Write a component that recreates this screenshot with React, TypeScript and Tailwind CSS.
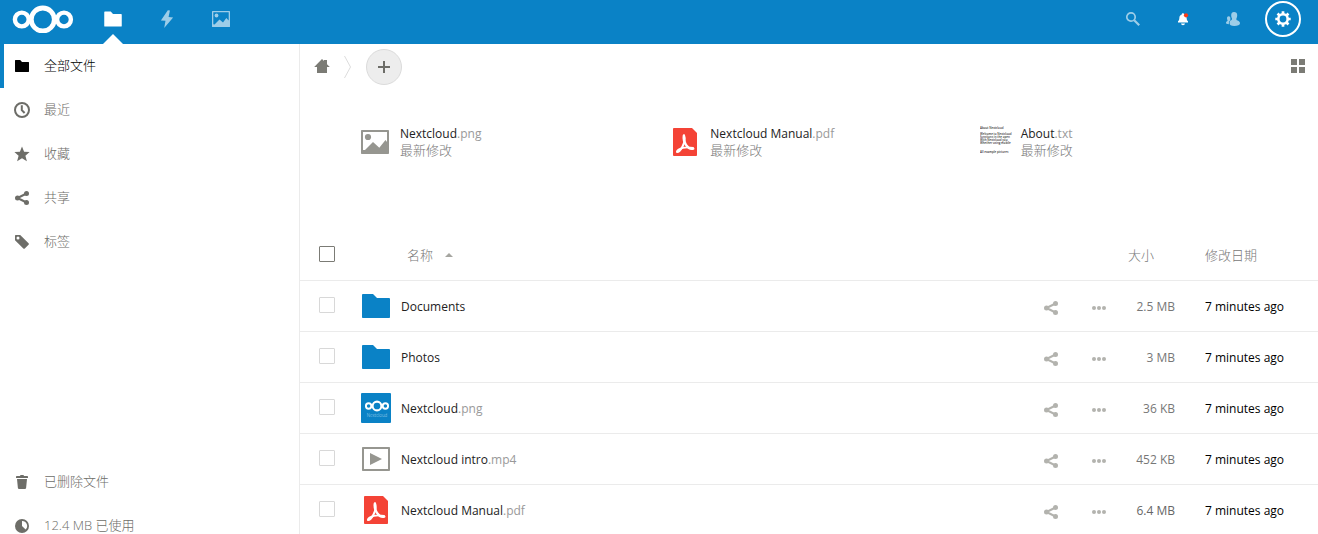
import React from "react";

type IconProps = { className?: string };

const Logo = ({ className = "" }: IconProps) => (
  <svg viewBox="0 0 62 28" className={className} fill="none" stroke="currentColor" aria-hidden="true">
    <circle cx="30.8" cy="14.5" r="11.5" strokeWidth="4.800" />
    <circle cx="9.8" cy="14.5" r="6.9" strokeWidth="4.400" />
    <circle cx="52" cy="14.5" r="6.9" strokeWidth="4.400" />
  </svg>
);

const FolderIcon = ({ className = "" }: IconProps) => (
  <svg viewBox="0 0 16 16" className={className} fill="currentColor" aria-hidden="true">
    <path d="M1.5 2c-.25 0-.5.25-.5.5v11c0 .26.24.5.5.5h13c.26 0 .5-.24.5-.5v-9c0-.25-.25-.5-.5-.5H8L6.2 2z" />
  </svg>
);

const BigFolderIcon = ({ className = "" }: IconProps) => (
  <svg viewBox="0 0 32 32" className={className} fill="currentColor" aria-hidden="true">
    <path d="M3 4c-.5 0-1 .5-1 1v22c0 .52.48 1 1 1h26c.52 0 1-.48 1-1V9c0-.5-.5-1-1-1H17l-4-4z" />
  </svg>
);

const BoltIcon = ({ className = "" }: IconProps) => (
  <svg viewBox="0 0 20 20" className={className} fill="currentColor" aria-hidden="true">
    <path d="M10.2 1 4 11.6h4.6L7.8 19 16 7.8h-4.6L12.3 1z" transform="translate(0 .2) rotate(4 10 10)" />
  </svg>
);

const GalleryIcon = ({ className = "" }: IconProps) => (
  <svg viewBox="0 0 20 20" className={className} fill="currentColor" aria-hidden="true">
    <path fillRule="evenodd" d="M1.6 2h16.8c.4 0 .6.3.6.6v14.8c0 .4-.2.6-.6.6H1.6c-.3 0-.6-.2-.6-.6V2.6c0-.3.3-.6.6-.6zm.7 1.3v11.9l1.2.3 5-5 3.5 3 3.3-4.6 2.4 2.5V3.3z" />
    <circle cx="5.5" cy="6.5" r="1.9" />
  </svg>
);

const ImageFileIcon = ({ className = "" }: IconProps) => (
  <svg viewBox="0 0 32 32" className={className} fill="currentColor" aria-hidden="true">
    <path fillRule="evenodd" d="M3 4h26c.6 0 1 .4 1 1v22c0 .6-.4 1-1 1H3c-.6 0-1-.4-1-1V5c0-.6.4-1 1-1zm1 2v17.9h2l8-7.9 6.3 5.7L26.5 14l1.5 2V6z" />
    <circle cx="9" cy="11" r="3.1" />
  </svg>
);

const VideoFileIcon = ({ className = "" }: IconProps) => (
  <svg viewBox="0 0 32 32" className={className} fill="currentColor" aria-hidden="true">
    <path fillRule="evenodd" d="M3 4h26c.6 0 1 .4 1 1v22c0 .6-.4 1-1 1H3c-.6 0-1-.4-1-1V5c0-.6.4-1 1-1zm1 2v20h24V6z" />
    <path d="M10 10v12l12-6z" />
  </svg>
);

const PdfFileIcon = ({ className = "" }: IconProps) => (
  <svg viewBox="0 0 32 32" className={className} aria-hidden="true">
    <path d="M5 2c-.5 0-1 .5-1 1v26c0 .5.5 1 1 1h22c.5 0 1-.5 1-1V7l-5-5z" fill="#f44336" />
    <g fill="none" stroke="#fff" strokeLinecap="round" strokeLinejoin="round">
      <path d="M14.8 9.600c-.5 3 .3 6.300 2.200 9.200 1.900 2.800 5 4.600 7.300 3.800" strokeWidth="2.300" />
      <path d="M15 9.400c1.400 3.600.6 7.300-1.600 11.300-1.800 3.200-4 5.500-5.400 5.300" strokeWidth="2.100" />
      <path d="M8 25.300c1.800-3.200 8.600-4.700 16-3.300" strokeWidth="1.800" />
    </g>
  </svg>
);

const NextcloudThumb = ({ className = "" }: IconProps) => (
  <svg viewBox="0 0 32 32" className={className} aria-hidden="true">
    <rect x="1" y="1" width="30" height="30" rx="1" fill="#0a82c6" />
    <g fill="none" stroke="#fff">
      <circle cx="17" cy="14" r="4.400" strokeWidth="2.100" />
      <circle cx="8.600" cy="14" r="2.700" strokeWidth="1.900" />
      <circle cx="25.400" cy="14" r="2.700" strokeWidth="1.900" />
    </g>
    <text x="17" y="25" textAnchor="middle" fontSize="4.500" fill="#b5daee" fontFamily="Open Sans, sans-serif">Nextcloud</text>
  </svg>
);

const SearchIcon = ({ className = "" }: IconProps) => (
  <svg viewBox="0 0 16 16" className={className} fill="none" stroke="currentColor" aria-hidden="true">
    <circle cx="6" cy="6" r="4.200" strokeWidth="1.700" />
    <path d="m9.200 9.200 5 5" strokeWidth="2.200" />
  </svg>
);

const BellIcon = ({ className = "" }: IconProps) => (
  <svg viewBox="0 0 16 16" className={className} fill="currentColor" aria-hidden="true">
    <path d="M8 2.200c-.7 0-1.200.5-1.200 1.200C5.200 3.900 4.500 5 4.400 6.600 4.300 9 3.900 9.600 3 10.300v1.200h10v-1.200c-.9-.7-1.300-1.300-1.400-3.700L8.800 2.500zM6 12.500h4c-.2 1-1 1.700-2 1.700s-1.800-.7-2-1.700z" />
    <circle cx="11" cy="4.300" r="2.100" fill="#ff3a14" />
  </svg>
);

const ContactsIcon = ({ className = "" }: IconProps) => (
  <svg viewBox="0 0 16 16" className={className} fill="currentColor" aria-hidden="true">
    <path d="M9 1C7.300 1 6.200 2.200 6.200 4c0 1.400.2 2.200.6 3 .3.700.3 1.900-.6 2.300C4.600 10 4.600 10.700 4.600 12.300 4.600 14 6 15 9.300 15s5.700-1 5.700-2.700c0-1.600-1.200-2.300-3-3-.7-.4-.8-1.500-.4-2.300.4-.8.6-1.600.6-3 0-1.800-1.100-3-3.200-3z" />
    <path d="M3.700 5.300C2.600 5.300 2 6.100 2 7.200c0 .9.200 1.300.5 2 .2.500 0 .8-.4 1C1.300 10.600 1 11 1 12c0 .7.900 1.100 2.900 1.200-.1-1.800 0-3 1.600-3.900-.3-.4-.1-1.300-.1-2.100 0-1.100-.6-1.900-1.700-1.900z" />
  </svg>
);

const GearIcon = ({ className = "" }: IconProps) => (
  <svg viewBox="0 0 16 16" className={className} fill="none" stroke="currentColor" aria-hidden="true">
    <circle cx="8" cy="8" r="4.700" strokeWidth="2.600" />
    <path
      d="M8 .3v2.700M8 13v2.700M.3 8H3M13 8h2.700M2.560 2.560l1.900 1.900M11.540 11.540l1.900 1.900M2.560 13.440l1.900-1.900M11.540 4.460l1.900-1.900"
      strokeWidth="2.700"
    />
  </svg>
);

const ClockIcon = ({ className = "" }: IconProps) => (
  <svg viewBox="0 0 16 16" className={className} fill="none" stroke="currentColor" aria-hidden="true">
    <circle cx="8" cy="8" r="7" strokeWidth="2" />
    <path d="M7.800 3.200v4.900l2.800 2.900" strokeWidth="2" />
  </svg>
);

const StarIcon = ({ className = "" }: IconProps) => (
  <svg viewBox="0 0 16 16" className={className} fill="currentColor" aria-hidden="true">
    <path d="m8 .6 2.100 5.100 5.500.4-4.200 3.600 1.500 5.500L8 12.200l-4.900 3 1.500-5.500L.4 6.100l5.500-.4z" />
  </svg>
);

const ShareIcon = ({ className = "" }: IconProps) => (
  <svg viewBox="0 0 16 16" className={className} fill="currentColor" aria-hidden="true">
    <circle cx="12.500" cy="3.500" r="2.500" />
    <circle cx="3.500" cy="8" r="2.500" />
    <circle cx="12.500" cy="12.500" r="2.500" />
    <path d="M12.500 3.500 3.500 8l9 4.500" fill="none" stroke="currentColor" strokeWidth="2.100" />
  </svg>
);

const TagIcon = ({ className = "" }: IconProps) => (
  <svg viewBox="0 0 16 16" className={className} fill="currentColor" aria-hidden="true">
    <path fillRule="evenodd" d="M1.600 1 1 1.600v4.600l8.600 8.600h.9l4.300-4.300v-.9L6.200 1zM4 2.500a1.500 1.500 0 1 1 0 3 1.500 1.500 0 0 1 0-3z" />
  </svg>
);

const TrashIcon = ({ className = "" }: IconProps) => (
  <svg viewBox="0 0 16 16" className={className} fill="currentColor" aria-hidden="true">
    <path d="M6.500 1 6 2H3c-.6 0-1 .4-1 1v1h12V3c0-.6-.4-1-1-1h-3l-.5-1zM3 5l.9 9c.1.600.5 1 1.100 1h6c.6 0 1-.4 1.100-1L13 5z" />
  </svg>
);

const QuotaIcon = ({ className = "" }: IconProps) => (
  <svg viewBox="0 0 16 16" className={className} aria-hidden="true">
    <circle cx="8" cy="8" r="7" fill="currentColor" />
    <path d="M8 3v5l3.600 3.600A5 5 0 0 0 8 3z" fill="#fff" />
  </svg>
);

const HomeIcon = ({ className = "" }: IconProps) => (
  <svg viewBox="0 0 16 16" className={className} fill="currentColor" aria-hidden="true">
    <path d="M8 0 .2 8H3v6h10V8h2.800L13 5.200V1h-3v1z" />
  </svg>
);

const ChevronIcon = ({ className = "" }: IconProps) => (
  <svg viewBox="0 0 8 22" className={className} fill="none" stroke="currentColor" aria-hidden="true">
    <path d="M.5 0l6 11-6 11" />
  </svg>
);

const PlusIcon = ({ className = "" }: IconProps) => (
  <svg viewBox="0 0 16 16" className={className} fill="none" stroke="currentColor" strokeWidth="2" aria-hidden="true">
    <path d="M8 2v12M2 8h12" />
  </svg>
);

const GridIcon = ({ className = "" }: IconProps) => (
  <svg viewBox="0 0 16 16" className={className} fill="currentColor" aria-hidden="true">
    <path d="M1 0h6v6H1zM9 0h6v6H9zM1 8h6v6H1zM9 8h6v6H9z" />
  </svg>
);

const MoreIcon = ({ className = "" }: IconProps) => (
  <svg viewBox="0 0 16 16" className={className} fill="currentColor" aria-hidden="true">
    <circle cx="3" cy="8" r="2" />
    <circle cx="8" cy="8" r="2" />
    <circle cx="13" cy="8" r="2" />
  </svg>
);

const TextThumb = ({ className = "" }: IconProps) => (
  <svg viewBox="0 0 32 32" className={className} fill="#333" fontFamily="Open Sans, sans-serif" fontSize="2.900" fontWeight="600" aria-hidden="true">
    <text x="0" y="3">About Nextcloud</text>
    <text x="0" y="9">Welcome to Nextcloud</text>
    <text x="0" y="12">functions in the open</text>
    <text x="0" y="15">With Nextcloud you</text>
    <text x="0" y="18">Whether using mobile</text>
    <text x="0" y="27">All example pictures</text>
  </svg>
);

const FileName = ({ name, ext }: { name: string; ext?: string }) => (
  <span className="text-xs leading-[17px] font-normal whitespace-nowrap text-[#222]">
    {name}
    {ext && <span className="text-[#999]">{ext}</span>}
  </span>
);

const NavItem = ({ icon, label, active = false }: { icon: React.ReactNode; label: string; active?: boolean }) => (
  <li>
    <a
      href="#"
      aria-current={active ? "page" : undefined}
      className={`flex h-11 items-center gap-3.5 border-l-4 pl-2.5 ${
        active ? "border-[#0a82c6] text-black" : "border-transparent text-[#6d6d68]"
      }`}
    >
      {icon}
      <span className={active ? "text-black" : "text-[#6d6d68]"}>{label}</span>
    </a>
  </li>
);

const recommended = [
  { name: "Nextcloud", ext: ".png", icon: <ImageFileIcon className="h-8 w-8 text-[#969690]" /> },
  { name: "Nextcloud Manual", ext: ".pdf", icon: <PdfFileIcon className="h-8 w-8" /> },
  { name: "About", ext: ".txt", icon: <TextThumb className="h-8 w-8" /> },
];

const files = [
  { name: "Documents", ext: "", size: "2.5 MB", tone: "text-[#777]", icon: <BigFolderIcon className="h-8 w-8 text-[#0a82c6]" /> },
  { name: "Photos", ext: "", size: "3 MB", tone: "text-[#777]", icon: <BigFolderIcon className="h-8 w-8 text-[#0a82c6]" /> },
  { name: "Nextcloud", ext: ".png", size: "36 KB", tone: "text-[#777]", icon: <NextcloudThumb className="h-8 w-8" /> },
  { name: "Nextcloud intro", ext: ".mp4", size: "452 KB", tone: "text-[#777]", icon: <VideoFileIcon className="h-8 w-8 text-[#969690]" /> },
  { name: "Nextcloud Manual", ext: ".pdf", size: "6.4 MB", tone: "text-[#666]", icon: <PdfFileIcon className="h-8 w-8" /> },
];

const iconButton = "flex h-[38px] w-[50px] items-center justify-center";

export default function App() {
  return (
    <div className="flex h-screen flex-col overflow-hidden bg-white font-['Open_Sans','Noto_Sans_CJK_SC',sans-serif] text-[13px] font-light text-[#222]">
      <header className="flex h-11 shrink-0 justify-between bg-[#0a82c6] pr-2.5 pl-3 text-white">
        <div className="flex">
          <a href="#" aria-label="Nextcloud" className="flex h-[38px] items-center pr-3">
            <Logo className="h-7 w-[62px]" />
          </a>
          <nav aria-label="Apps" className="flex">
            <a href="#" aria-label="Files" className="relative flex h-11 w-[54px] justify-center pt-[9px]">
              <FolderIcon className="h-5 w-5" />
              <svg viewBox="0 0 20 10" className="absolute bottom-0 h-2.5 w-5" fill="#fff" aria-hidden="true">
                <path d="M0 10 10 0l10 10z" />
              </svg>
            </a>
            <a href="#" aria-label="Activity" className="flex h-[38px] w-[54px] items-center justify-center">
              <BoltIcon className="h-5 w-5 opacity-60" />
            </a>
            <a href="#" aria-label="Gallery" className="flex h-[38px] w-[54px] items-center justify-center">
              <GalleryIcon className="h-5 w-5 opacity-60" />
            </a>
          </nav>
        </div>
        <div className="flex">
          <button type="button" aria-label="Search" className={iconButton}>
            <SearchIcon className="h-4 w-4 opacity-60" />
          </button>
          <button type="button" aria-label="Notifications" className={iconButton}>
            <BellIcon className="h-4 w-4" />
          </button>
          <button type="button" aria-label="Contacts" className={iconButton}>
            <ContactsIcon className="h-4 w-4 opacity-60" />
          </button>
          <button type="button" aria-label="Settings" className={iconButton}>
            <span className="flex h-9 w-9 items-center justify-center rounded-full border-2 border-white">
              <GearIcon className="h-4 w-4" />
            </span>
          </button>
        </div>
      </header>

      <div className="flex min-h-0 flex-1">
        <nav aria-label="Files" className="flex w-[300px] shrink-0 flex-col border-r border-[#ebebeb]">
          <ul>
            <NavItem active icon={<FolderIcon className="h-4 w-4" />} label="全部文件" />
            <NavItem icon={<ClockIcon className="h-4 w-4" />} label="最近" />
            <NavItem icon={<StarIcon className="h-4 w-4" />} label="收藏" />
            <NavItem icon={<ShareIcon className="h-4 w-4" />} label="共享" />
            <NavItem icon={<TagIcon className="h-4 w-4" />} label="标签" />
          </ul>
          <ul className="mt-auto -mb-3.5">
            <NavItem icon={<TrashIcon className="h-4 w-4" />} label="已删除文件" />
            <NavItem icon={<QuotaIcon className="h-4 w-4" />} label="12.4 MB 已使用" />
          </ul>
        </nav>

        <main className="min-w-0 flex-1 overflow-hidden">
          <div className="flex h-11 items-center justify-between pt-0.5 pr-3 pl-3.5">
            <div className="flex items-center gap-3.5">
              <a href="#" aria-label="Home" className="text-[#7b7b75]">
                <HomeIcon className="h-4 w-4" />
              </a>
              <ChevronIcon className="h-[22px] w-2 text-[#dcdcdc]" />
              <button
                type="button"
                aria-label="New"
                className="flex h-9 w-9 items-center justify-center rounded-full border border-[#dbdbdb] bg-[#ededed] text-[#6d6d68]"
              >
                <PlusIcon className="h-4 w-4" />
              </button>
            </div>
            <button type="button" aria-label="Toggle grid view" className="text-[#7b7b75]">
              <GridIcon className="h-4 w-4" />
            </button>
          </div>

          <ul className="grid h-[141px] grid-cols-3 pt-[37px] pr-7 pl-[59px]">
            {recommended.map((file) => (
              <li key={file.name}>
                <a href="#" className="flex items-center gap-[9px]">
                  {file.icon}
                  <span className="flex flex-col leading-[17px]">
                    <FileName name={file.name} ext={file.ext} />
                    <span className="text-[#777]">最新修改</span>
                  </span>
                </a>
              </li>
            ))}
          </ul>

          <table className="w-full table-fixed">
            <colgroup>
              <col className="w-[52px]" />
              <col />
              <col className="w-24" />
              <col className="w-[52px]" />
              <col className="w-[143px]" />
            </colgroup>
            <thead>
              <tr className="h-[51px] border-b border-[#ebebeb] text-left text-[#777]">
                <th className="pl-[19px] font-light">
                  <input
                    type="checkbox"
                    aria-label="Select all"
                    className="block h-4 w-4 appearance-none rounded-[1px] border border-[#7b7b75]"
                  />
                </th>
                <th className="pt-0.5 pl-[55px] font-light">
                  <button type="button" className="flex items-center gap-3">
                    名称
                    <svg viewBox="0 0 8 4" className="h-1 w-2 text-[#a5a5a0]" fill="currentColor" aria-hidden="true">
                      <path d="M0 4 4 0l4 4z" />
                    </svg>
                  </button>
                </th>
                <th aria-label="Actions" />
                <th className="pt-0.5 pl-[5px] font-light">
                  <button type="button">大小</button>
                </th>
                <th className="pt-0.5 pl-[30px] font-light">
                  <button type="button">修改日期</button>
                </th>
              </tr>
            </thead>
            <tbody>
              {files.map((file) => (
                <tr key={file.name + file.ext} className="h-[51px] border-b border-[#ebebeb]">
                  <td className="pb-0.5 pl-[19px]">
                    <input
                      type="checkbox"
                      aria-label={`Select ${file.name}${file.ext}`}
                      className="block h-4 w-4 appearance-none rounded-[1px] border border-[#d8d8d8]"
                    />
                  </td>
                  <td className="pl-2">
                    <a href="#" className="flex items-center gap-[9px]">
                      {file.icon}
                      <span className="flex pt-0.5">
                        <FileName name={file.name} ext={file.ext} />
                      </span>
                    </a>
                  </td>
                  <td>
                    <div className="flex pt-1 text-[#b3b3ae]">
                      <button type="button" aria-label="Share" className="flex w-12 justify-center">
                        <ShareIcon className="h-4 w-4" />
                      </button>
                      <button type="button" aria-label="More actions" className="flex w-12 justify-center">
                        <MoreIcon className="h-4 w-4" />
                      </button>
                    </div>
                  </td>
                  <td className={`pt-0.5 text-right text-xs font-normal whitespace-nowrap ${file.tone}`}>{file.size}</td>
                  <td className="pt-0.5 pl-[30px] text-xs font-normal whitespace-nowrap text-black">7 minutes ago</td>
                </tr>
              ))}
            </tbody>
          </table>
        </main>
      </div>
    </div>
  );
}
